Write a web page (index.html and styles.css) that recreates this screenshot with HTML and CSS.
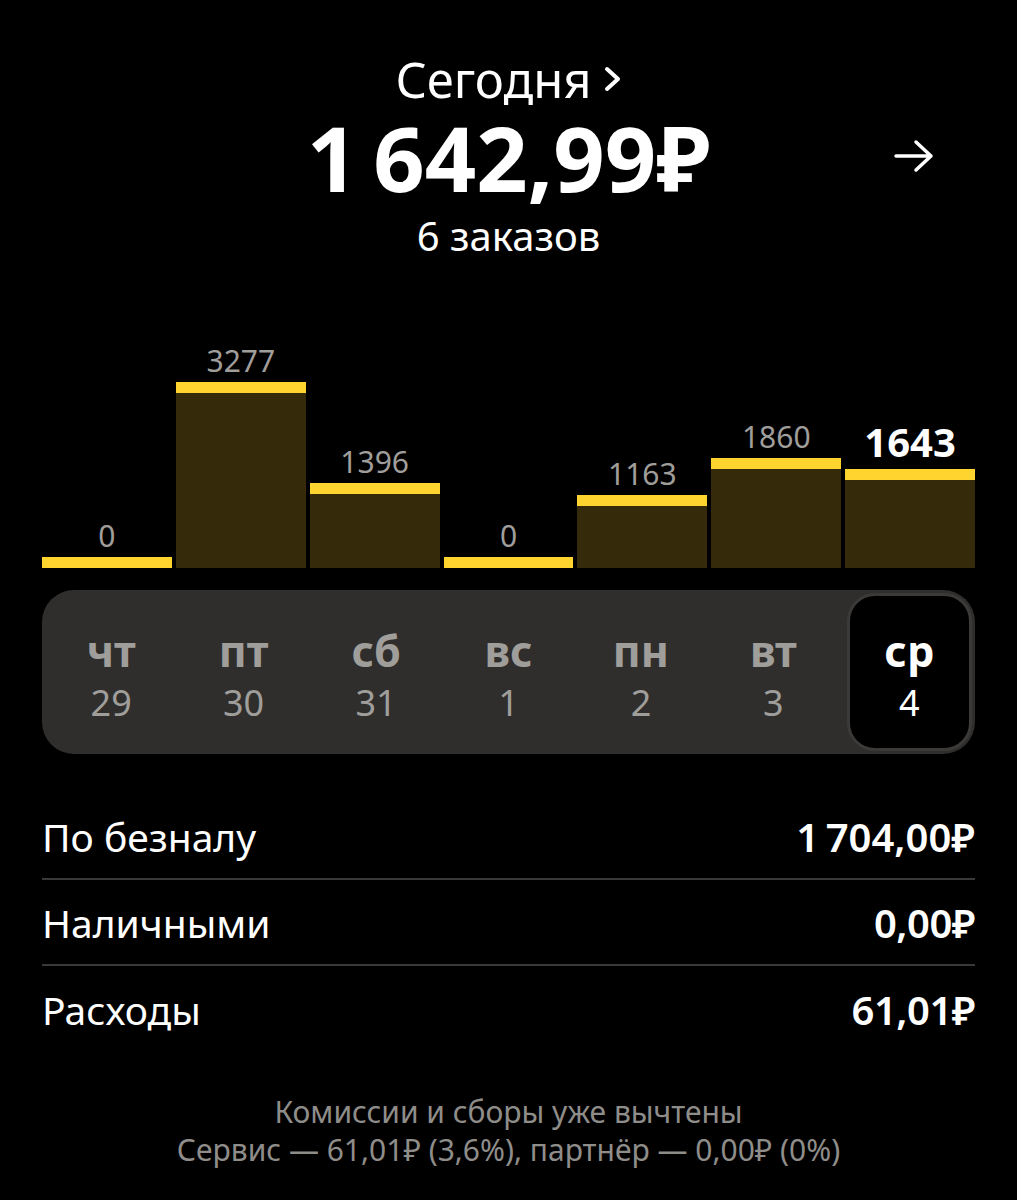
FILE: index.html
```html
<!DOCTYPE html>
<html lang="ru">
<head>
    <meta charset="UTF-8">
    <meta name="viewport" content="width=device-width, initial-scale=1.0">
    <title>Доход за сегодня</title>
    <link rel="stylesheet" href="styles.css">
</head>
<body>
    <div class="page">
        <div class="summary">
            <div class="period">
                <span>Сегодня</span>
                <svg class="chevron" width="18" height="26" viewBox="0 0 18 26">
                    <path d="M3 3 L14 13 L3 23" fill="none" stroke="#fff" stroke-width="4" stroke-linecap="round" stroke-linejoin="round"/>
                </svg>
            </div>
            <div class="total-row">
                <div></div>
                <div class="total">1&#8239;642,99₽</div>
                <div class="total-link">
                    <svg width="42" height="36" viewBox="0 0 42 36">
                        <path d="M3 18 H38 M23 4 L38 18 L23 32" fill="none" stroke="#fff" stroke-width="3.5" stroke-linecap="round" stroke-linejoin="round"/>
                    </svg>
                </div>
            </div>
            <div class="orders">6 заказов</div>
        </div>

        <div class="chart">
            <div class="col">
                <span class="value">0</span>
                <div class="bar" style="height: 11px"></div>
            </div>
            <div class="col">
                <span class="value">3277</span>
                <div class="bar" style="height: 186px"></div>
            </div>
            <div class="col">
                <span class="value">1396</span>
                <div class="bar" style="height: 85px"></div>
            </div>
            <div class="col">
                <span class="value">0</span>
                <div class="bar" style="height: 11px"></div>
            </div>
            <div class="col">
                <span class="value">1163</span>
                <div class="bar" style="height: 73px"></div>
            </div>
            <div class="col">
                <span class="value">1860</span>
                <div class="bar" style="height: 110px"></div>
            </div>
            <div class="col current">
                <span class="value">1643</span>
                <div class="bar" style="height: 99px"></div>
            </div>
        </div>

        <div class="days">
            <div class="day"><span class="day-name">чт</span><span class="day-num">29</span></div>
            <div class="day"><span class="day-name">пт</span><span class="day-num">30</span></div>
            <div class="day"><span class="day-name">сб</span><span class="day-num">31</span></div>
            <div class="day"><span class="day-name">вс</span><span class="day-num">1</span></div>
            <div class="day"><span class="day-name">пн</span><span class="day-num">2</span></div>
            <div class="day"><span class="day-name">вт</span><span class="day-num">3</span></div>
            <div class="day selected"><span class="day-name">ср</span><span class="day-num">4</span></div>
        </div>

        <div class="details">
            <div class="detail-row">
                <span>По безналу</span>
                <span class="amount">1&#8239;704,00₽</span>
            </div>
            <div class="detail-row">
                <span>Наличными</span>
                <span class="amount">0,00₽</span>
            </div>
            <div class="detail-row">
                <span>Расходы</span>
                <span class="amount">61,01₽</span>
            </div>
        </div>

        <div class="note">
            <p>Комиссии и сборы уже вычтены</p>
            <p>Сервис — 61,01₽ (3,6%), партнёр — 0,00₽ (0%)</p>
        </div>
    </div>
</body>
</html>
```

FILE: styles.css
```css
* {
    margin: 0;
    padding: 0;
    box-sizing: border-box;
}

body {
    background-color: #000;
    color: #fff;
    font-family: 'Noto Sans', 'DejaVu Sans', sans-serif;
}

.page {
    width: 1017px;
    padding: 50px 42px 40px;
}

/* Заголовок с суммой */
.summary {
    display: flex;
    flex-direction: column;
    align-items: center;
}

.period {
    display: flex;
    align-items: center;
    gap: 12px;
    font-size: 49px;
    line-height: 58px;
}

.total-row {
    display: grid;
    grid-template-columns: 1fr auto 1fr;
    align-items: center;
    width: 100%;
}

.total {
    font-size: 90px;
    font-weight: 700;
    line-height: 98px;
    letter-spacing: -2px;
}

.total-link {
    justify-self: end;
    display: flex;
    padding-right: 40px;
    margin-top: -2px;
}

.orders {
    font-size: 40px;
    line-height: 48px;
    margin-top: 6px;
}

/* График */
.chart {
    display: flex;
    align-items: flex-end;
    gap: 4px;
    height: 248px;
    margin-top: 60px;
}

.col {
    flex: 1;
    display: flex;
    flex-direction: column;
    align-items: center;
}

.value {
    font-size: 30px;
    line-height: 34px;
    color: #a09e9b;
    margin-bottom: 4px;
}

.col.current .value {
    font-size: 40px;
    line-height: 46px;
    font-weight: 700;
    color: #fff;
    margin-bottom: 4px;
}

.bar {
    width: 100%;
    background-color: #352b0b;
    border-top: 11px solid #ffd42e;
}

/* Выбор дня */
.days {
    display: grid;
    grid-template-columns: repeat(7, 1fr);
    height: 164px;
    margin-top: 22px;
    padding: 3px;
    background-color: #2f2e2c;
    border-radius: 32px;
}

.day {
    display: flex;
    flex-direction: column;
    align-items: center;
    justify-content: center;
    color: #a09e9b;
    border-radius: 28px;
    padding-top: 8px;
}

.day-name {
    font-size: 43px;
    font-weight: 700;
    line-height: 48px;
}

.day-num {
    font-size: 36px;
    line-height: 44px;
    margin-top: 6px;
}

.day.selected {
    background-color: #000;
    color: #fff;
    border: 3px solid #3b3a38;
    margin-left: 7px;
}

/* Детали */
.details {
    margin-top: 40px;
}

.detail-row {
    display: flex;
    justify-content: space-between;
    align-items: center;
    height: 86px;
    font-size: 39px;
    border-bottom: 2px solid #3a3938;
}

.detail-row:last-child {
    border-bottom: none;
}

.amount {
    font-size: 40px;
    font-weight: 600;
    letter-spacing: -0.5px;
}

.note {
    margin-top: 41px;
    text-align: center;
    color: #8f8d8a;
    font-size: 30px;
    line-height: 38px;
}
```
